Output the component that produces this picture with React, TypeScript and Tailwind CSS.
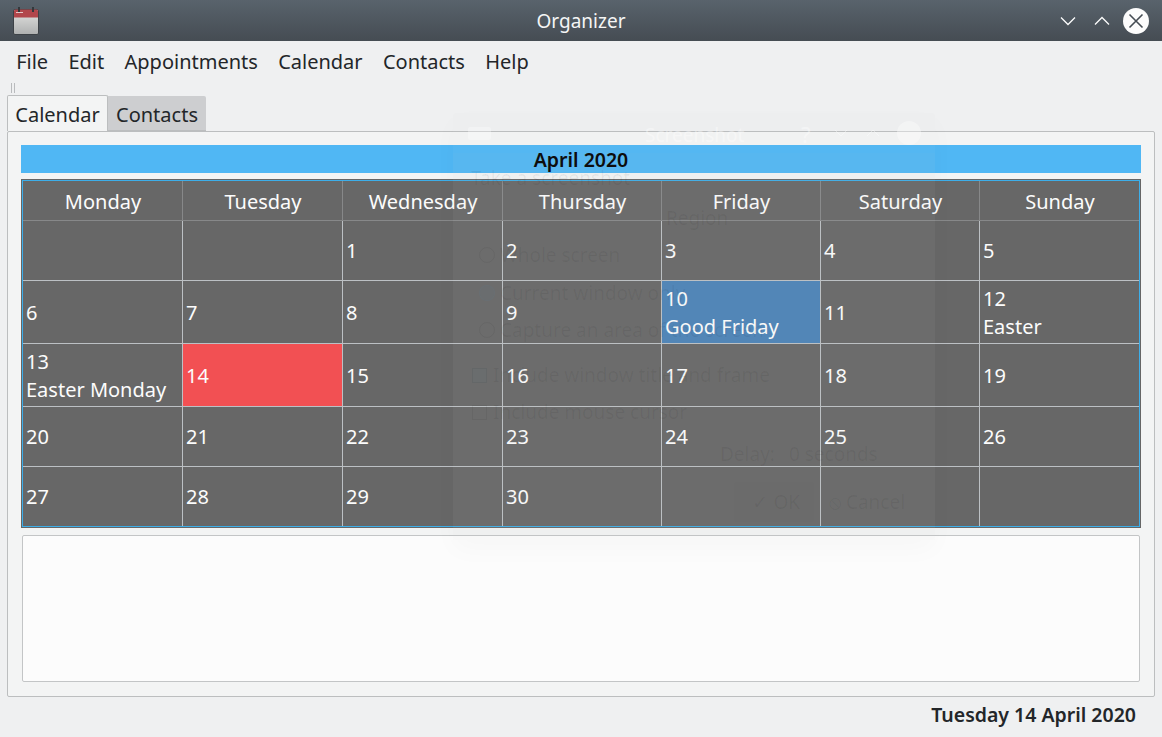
const MENUS = ["File", "Edit", "Appointments", "Calendar", "Contacts", "Help"];
const DAYS = ["Monday", "Tuesday", "Wednesday", "Thursday", "Friday", "Saturday", "Sunday"];

type Cell = { day?: number; note?: string; bg?: string };

const WEEKS: { h: string; pad?: boolean; cells: Cell[] }[] = [
  { h: "h-[60px]", cells: [{}, {}, { day: 1 }, { day: 2 }, { day: 3 }, { day: 4 }, { day: 5 }] },
  {
    h: "h-[63px]",
    pad: true,
    cells: [
      { day: 6 },
      { day: 7 },
      { day: 8 },
      { day: 9 },
      { day: 10, note: "Good Friday", bg: "bg-[#4a83b7]" },
      { day: 11 },
      { day: 12, note: "Easter" },
    ],
  },
  {
    h: "h-[63px]",
    pad: true,
    cells: [
      { day: 13, note: "Easter Monday" },
      { day: 14, bg: "bg-[#f25053]" },
      { day: 15 },
      { day: 16 },
      { day: 17 },
      { day: 18 },
      { day: 19 },
    ],
  },
  { h: "h-[60px]", cells: [{ day: 20 }, { day: 21 }, { day: 22 }, { day: 23 }, { day: 24 }, { day: 25 }, { day: 26 }] },
  { h: "h-[59px]", cells: [{ day: 27 }, { day: 28 }, { day: 29 }, { day: 30 }, {}, {}, {}] },
];

const COLS = "grid grid-cols-[160px_160px_160px_159px_159px_159px_159px]";

function AppIcon() {
  return (
    <svg width="27" height="28" viewBox="0 0 27 28" className="ml-[13px]">
      <defs>
        <linearGradient id="page" x1="0" y1="0" x2="0" y2="1">
          <stop offset="0" stopColor="#e4e4e2" />
          <stop offset="1" stopColor="#aeb0b0" />
        </linearGradient>
      </defs>
      <rect x="0.5" y="2.5" width="25" height="25" rx="1.5" fill="url(#page)" stroke="#3d4247" />
      <path d="M1 4a1.5 1.5 0 0 1 1.5-1.5h21A1.5 1.5 0 0 1 25 4v6.5H1z" fill="#b2464b" />
      <rect x="5" y="0" width="2" height="5" fill="#33383c" />
      <rect x="19" y="0" width="2" height="5" fill="#33383c" />
      <rect x="3" y="5" width="7" height="1" fill="#e6c8c8" />
    </svg>
  );
}

function TitleBar() {
  return (
    <div className="flex h-[41px] items-center bg-gradient-to-b from-[#59636c] to-[#454c53]">
      <AppIcon />
      <div className="ml-[62px] flex-1 text-center text-[19px] text-[#f4f5f5]">Organizer</div>
      <svg width="16" height="10" viewBox="0 0 16 10" className="mr-[18px]" fill="none" stroke="#fcfcfc" strokeWidth="1.3">
        <path d="M1 1.5 8 8.5 15 1.5" />
      </svg>
      <svg width="16" height="10" viewBox="0 0 16 10" className="mr-[13px]" fill="none" stroke="#fcfcfc" strokeWidth="1.3">
        <path d="M1 8.5 8 1.5 15 8.5" />
      </svg>
      <svg width="26" height="26" viewBox="0 0 26 26" className="mr-[13px]">
        <circle cx="13" cy="13" r="13" fill="#fcfcfc" />
        <path d="M6.5 6.5 19.5 19.5M19.5 6.5 6.5 19.5" stroke="#454c53" strokeWidth="1.6" />
      </svg>
    </div>
  );
}

function CalendarTable() {
  return (
    <div className="mx-[13px] mt-[6px] h-[349px] w-[1120px] border border-[#666666]">
      <div className="h-[347px] border border-[#3daee9] bg-[#676767]">
        <div className={`${COLS} h-[40px]`}>
          {DAYS.map((d, j) => (
            <div
              key={d}
              className={`flex items-center justify-center border-b border-[#878889] pt-[2px] pl-[1px] text-[#fcfcfc] ${
                j < 6 ? "border-r" : ""
              }`}
            >
              {d}
            </div>
          ))}
        </div>
        {WEEKS.map((w, i) => (
          <div key={i} className={`${COLS} ${w.h}`}>
            {w.cells.map((c, j) => (
              <div
                key={j}
                className={`flex flex-col justify-center border-[#bcc0c4] pl-[3px] leading-[28px] text-[#fcfcfc] ${
                  i < WEEKS.length - 1 ? "border-b" : ""
                } ${j < 6 ? "border-r" : ""} ${w.pad ? "pt-[2px]" : ""} ${c.bg ?? ""}`}
              >
                {c.day && <span>{c.day}</span>}
                {c.note && <span className="whitespace-nowrap">{c.note}</span>}
              </div>
            ))}
          </div>
        ))}
      </div>
    </div>
  );
}

// faint remains of the Screenshot dialog, composited over the window
function GhostDialog() {
  const ink = "text-[#000000]/[0.06]";
  return (
    <div className="pointer-events-none absolute top-[113px] left-[453px] h-[427px] w-[482px] rounded-[3px] bg-[#c8c8c8]/[0.04] text-[19px] shadow-[0_10px_26px_rgba(0,0,0,0.025)]">
      <div className="relative flex h-[40px] items-center">
        <span className="ml-[15px] h-[13px] w-[23px] rounded-[2px] bg-[#ffffff]/[0.3]" />
        <span className="absolute top-[8px] left-[192px] text-[#ffffff]/[0.4]">Screenshot</span>
        <span className="absolute top-[7px] left-[348px] text-[22px] text-[#ffffff]/[0.4]">?</span>
        <svg width="90" height="26" viewBox="0 0 90 26" className="absolute left-[380px]" fill="none" stroke="#ffffff" strokeOpacity="0.4">
          <path d="M2 10 8 16 14 10M34 16 40 10 46 16" />
          <circle cx="76" cy="13" r="12" fill="#ffffff" fillOpacity="0.35" stroke="none" />
        </svg>
      </div>
      <div className="h-[387px] bg-[#c8c8c8]/[0.03] pt-[11px] pl-[18px]">
        <div className={ink}>Take a screenshot</div>
        <div className={`mt-[12px] ml-[195px] ${ink}`}>Region</div>
        <div className={`mt-[9px] flex h-[28px] items-center gap-[5px] ${ink}`}>
          <span className="ml-[8px] h-[16px] w-[16px] rounded-full border border-[#000000]/[0.05]" />
          Whole screen
        </div>
        <div className={`mt-[10px] flex h-[28px] items-center gap-[5px] ${ink}`}>
          <span className="ml-[8px] h-[16px] w-[16px] rounded-full border border-[#3daee9]/[0.03] bg-[#3daee9]/[0.03]" />
          Current window only
        </div>
        <div className={`mt-[9px] flex h-[28px] items-center gap-[5px] ${ink}`}>
          <span className="ml-[8px] h-[16px] w-[16px] rounded-full border border-[#000000]/[0.05]" />
          Capture an area of the screen
        </div>
        <div className={`mt-[17px] flex h-[28px] items-center gap-[6px] ${ink}`}>
          <span className="ml-[1px] h-[15px] w-[15px] border border-[#000000]/[0.05] bg-[#3daee9]/[0.025]" />
          Include window title and frame
        </div>
        <div className={`mt-[9px] flex h-[28px] items-center gap-[6px] ${ink}`}>
          <span className="ml-[1px] h-[15px] w-[15px] border border-[#000000]/[0.05]" />
          Include mouse cursor
        </div>
        <div className={`mt-[11px] ml-[249px] flex h-[34px] items-center ${ink}`}>
          Delay:
          <span className="ml-[8px] flex h-[34px] w-[135px] items-center pl-[6px]">0 seconds</span>
        </div>
        <div className={`mt-[11px] ml-[263px] flex h-[40px] items-center ${ink}`}>
          <span className="flex h-[40px] w-[80px] items-center justify-end rounded-[2px] bg-[#000000]/[0.006] pr-[14px]">✓ OK</span>
          <span className="ml-[15px]">⦸ Cancel</span>
        </div>
      </div>
    </div>
  );
}

export default function App() {
  return (
    <div
      className="relative h-[737px] w-[1162px] overflow-hidden bg-[#eff0f1] text-[20px] leading-[28px] text-[#232629]"
      style={{ fontFamily: '"Noto Sans", "Open Sans", sans-serif' }}
    >
      <TitleBar />
      <div className="flex h-[42px] items-center pl-[6px]">
        {MENUS.map((m) => (
          <span key={m} className="px-[10.15px]">
            {m}
          </span>
        ))}
      </div>
      <div className="ml-[11px] flex h-[13px] gap-[2px] pb-[3px]">
        <span className="w-px bg-[#b9bbbd]" />
        <span className="w-px bg-[#b9bbbd]" />
      </div>

      <div className="relative z-10 ml-[7px] flex h-[35px] items-end">
        <div className="flex h-[36px] w-[101px] items-center justify-center rounded-t-[2px] border border-b-0 border-[#bcbebf] bg-[#f3f4f4] pt-[3px]">
          Calendar
        </div>
        <div className="flex h-[35px] w-[98px] items-center justify-center rounded-tr-[2px] border-b border-[#bcbebf] bg-[#cdced0] pt-[3px]">
          Contacts
        </div>
      </div>

      <div className="mx-[7px] h-[566px] w-[1148px] rounded-[2px] border border-[#bcbebf] bg-[#f3f4f4] pt-[13px]">
        <div className="mx-[13px] h-[28px] w-[1120px] bg-[#50b7f4] pt-[1px] text-center text-[19.5px] font-semibold text-black">
          April 2020
        </div>
        <CalendarTable />
        <div className="mx-[14px] mt-[7px] h-[147px] w-[1118px] rounded-[2px] border border-[#c3c5c6] bg-[#fcfcfc]" />
      </div>

      <div className="flex h-[36px] items-center justify-end pr-[26px] text-[19.5px] font-semibold">Tuesday 14 April 2020</div>

      <GhostDialog />
    </div>
  );
}
